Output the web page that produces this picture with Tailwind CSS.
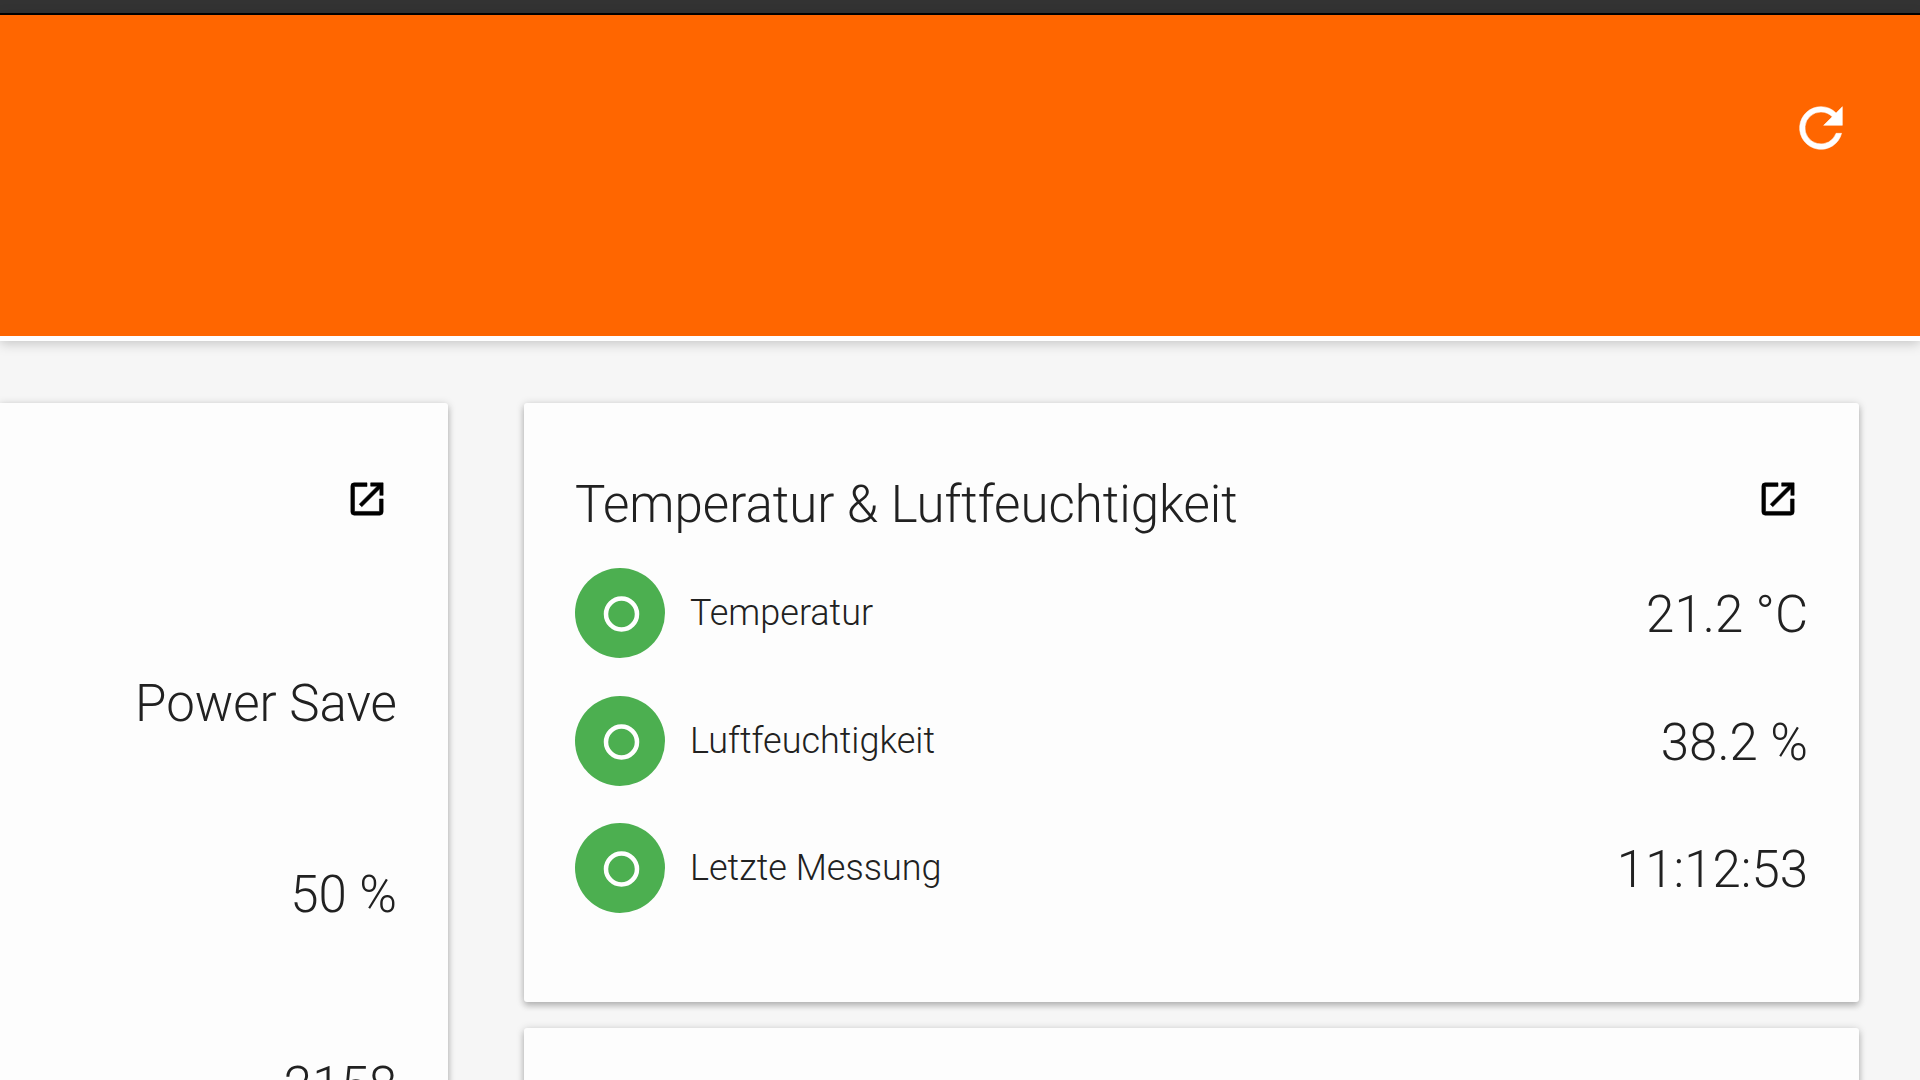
<!DOCTYPE html>
<html lang="de">
<head>
<meta charset="utf-8">
<title>Temperatur &amp; Luftfeuchtigkeit</title>
<script src="https://cdn.jsdelivr.net/npm/@tailwindcss/browser@4"></script>
</head>
<body class="flex h-screen flex-col overflow-hidden bg-[#f6f6f6] font-['Roboto',sans-serif] font-light text-[#212121]">
  <div class="h-[15px] shrink-0 border-b-2 border-black bg-[#333333]"></div>
  <header class="relative flex h-[326px] shrink-0 items-start justify-end border-b-5 border-white bg-[#ff6600] px-[67px] pt-[81px] shadow-[0_2px_12px_rgba(0,0,0,0.22)]">
    <button type="button" aria-label="Aktualisieren" class="text-white">
      <svg class="size-16" viewBox="0 0 24 24" fill="currentColor" stroke="currentColor" stroke-width="0.2"><path d="M17.65 6.35A7.96 7.96 0 0 0 12 4a8 8 0 1 0 7.73 10h-2.08A6 6 0 1 1 12 6c1.66 0 3.14.69 4.22 1.78L13 11h7V4z"/></svg>
    </button>
  </header>

  <main class="flex grow items-start gap-[76px] pt-[62px] pr-[61px]">
    <section class="flex w-[448px] shrink-0 flex-col rounded-r-[3px] bg-[#fdfdfd] px-[51px] pt-[74px] pb-14 shadow-[0_4px_6px_rgba(0,0,0,0.18),0_1px_8px_rgba(0,0,0,0.18)]">
      <div class="flex justify-end pr-2">
        <a href="#" aria-label="Öffnen" class="text-black"><svg class="size-11" viewBox="0 0 24 24" fill="currentColor" stroke="currentColor" stroke-width="0.3"><path d="M18.800 18.800H5.200V5.200h6.800V3.200H5a1.800 1.800 0 0 0-1.800 1.800v14a1.800 1.800 0 0 0 1.800 1.800h14a1.800 1.800 0 0 0 1.800-1.800v-7h-2zM14 3.200v1.800h3.590l-9.830 9.830 1.410 1.410L19 6.410V10h1.800V3.200z"/></svg></a>
      </div>
      <ul class="mt-[153px] flex flex-col gap-[131px] text-right text-[51px] leading-[60px]">
        <li>Power Save</li>
        <li>50 %</li>
        <li>2158</li>
      </ul>
    </section>

    <div class="flex min-w-0 grow flex-col gap-[26px]">
      <section class="rounded-[3px] bg-[#fdfdfd] px-[51px] pt-[74px] pb-[89px] shadow-[0_4px_6px_rgba(0,0,0,0.18),0_1px_8px_rgba(0,0,0,0.18)]">
        <div class="flex h-[91px] items-start justify-between pr-2">
          <h2 class="text-[51px] leading-[56px]">Temperatur &amp; Luftfeuchtigkeit</h2>
          <a href="#" aria-label="Öffnen" class="text-black"><svg class="size-11" viewBox="0 0 24 24" fill="currentColor" stroke="currentColor" stroke-width="0.3"><path d="M18.800 18.800H5.200V5.200h6.800V3.200H5a1.800 1.800 0 0 0-1.800 1.800v14a1.800 1.800 0 0 0 1.800 1.800h14a1.800 1.800 0 0 0 1.800-1.800v-7h-2zM14 3.200v1.800h3.590l-9.830 9.830 1.410 1.410L19 6.410V10h1.800V3.200z"/></svg></a>
        </div>
        <ul class="flex flex-col gap-[38px]">
          <li class="flex h-[90px] items-center">
            <svg class="mr-[25px] size-[90px] shrink-0" viewBox="0 0 90 90"><circle cx="45" cy="45" r="45" fill="#4caf50"/><circle cx="46.500" cy="46" r="15.500" fill="none" stroke="#fff" stroke-width="4.500"/></svg>
            <span class="text-[36px] leading-[48px]">Temperatur</span>
            <span class="ml-auto pt-1 text-[51px] leading-[60px]">21.2 °C</span>
          </li>
          <li class="flex h-[89px] items-center">
            <svg class="mr-[25px] size-[90px] shrink-0" viewBox="0 0 90 90"><circle cx="45" cy="45" r="45" fill="#4caf50"/><circle cx="46.500" cy="46" r="15.500" fill="none" stroke="#fff" stroke-width="4.500"/></svg>
            <span class="text-[36px] leading-[48px]">Luftfeuchtigkeit</span>
            <span class="ml-auto pt-1 text-[51px] leading-[60px]">38.2 %</span>
          </li>
          <li class="flex h-[90px] items-center">
            <svg class="mr-[25px] size-[90px] shrink-0" viewBox="0 0 90 90"><circle cx="45" cy="45" r="45" fill="#4caf50"/><circle cx="46.500" cy="46" r="15.500" fill="none" stroke="#fff" stroke-width="4.500"/></svg>
            <span class="text-[36px] leading-[48px]">Letzte Messung</span>
            <span class="ml-auto pt-1 text-[51px] leading-[60px]">11:12:53</span>
          </li>
        </ul>
      </section>
      <section class="h-96 rounded-[3px] bg-[#fdfdfd] shadow-[0_4px_6px_rgba(0,0,0,0.18),0_1px_8px_rgba(0,0,0,0.18)]"></section>
    </div>
  </main>
</body>
</html>
